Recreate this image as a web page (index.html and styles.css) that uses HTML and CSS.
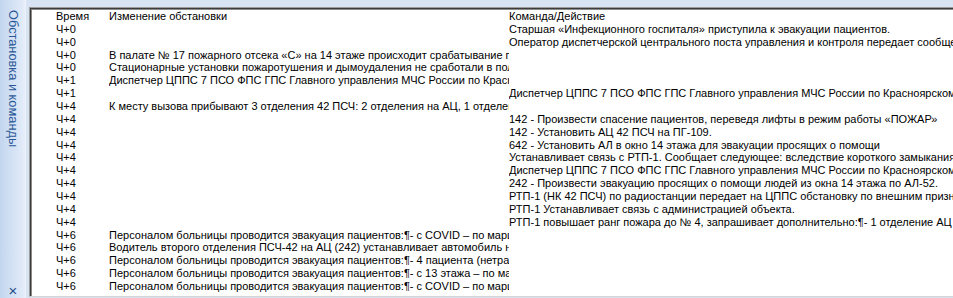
FILE: index.html
```html
<!DOCTYPE html>
<html lang="ru">
<head>
<meta charset="utf-8">
<title>Обстановка и команды</title>
<link rel="stylesheet" href="styles.css">
</head>
<body>
<div class="window">
  <aside class="sidebar">
    <span class="sidebar-title">Обстановка и команды</span>
    <span class="sidebar-close">×</span>
  </aside>
  <main class="panel">
    <div class="grid">
      <div class="cell">Время</div><div class="cell">Изменение обстановки</div><div class="cell">Команда/Действие</div>
      <div class="cell">Ч+0</div><div class="cell"></div><div class="cell">Старшая «Инфекционного госпиталя» приступила к эвакуации пациентов.</div>
      <div class="cell">Ч+0</div><div class="cell"></div><div class="cell">Оператор диспетчерской центрального поста управления и контроля передает сообщение о пожаре в ЦППС</div>
      <div class="cell">Ч+0</div><div class="cell">В палате № 17 пожарного отсека «С» на 14 этаже происходит срабатывание пожарной сигнализации</div><div class="cell"></div>
      <div class="cell">Ч+0</div><div class="cell">Стационарные установки пожаротушения и дымоудаления не сработали в полном объеме</div><div class="cell"></div>
      <div class="cell">Ч+1</div><div class="cell">Диспетчер ЦППС 7 ПСО ФПС ГПС Главного управления МЧС России по Красноярскому краю</div><div class="cell"></div>
      <div class="cell">Ч+1</div><div class="cell"></div><div class="cell">Диспетчер ЦППС 7 ПСО ФПС ГПС Главного управления МЧС России по Красноярскому краю высылает</div>
      <div class="cell">Ч+4</div><div class="cell">К месту вызова прибывают 3 отделения 42 ПСЧ: 2 отделения на АЦ, 1 отделение на АЛ-52</div><div class="cell"></div>
      <div class="cell">Ч+4</div><div class="cell"></div><div class="cell">142 - Произвести спасение пациентов, переведя лифты в режим работы «ПОЖАР»</div>
      <div class="cell">Ч+4</div><div class="cell"></div><div class="cell">142 - Установить АЦ 42 ПСЧ на ПГ-109.</div>
      <div class="cell">Ч+4</div><div class="cell"></div><div class="cell">642 - Установить АЛ в окно 14 этажа для эвакуации просящих о помощи</div>
      <div class="cell">Ч+4</div><div class="cell"></div><div class="cell">Устанавливает связь с РТП-1. Сообщает следующее: вследствие короткого замыкания произошло</div>
      <div class="cell">Ч+4</div><div class="cell"></div><div class="cell">Диспетчер ЦППС 7 ПСО ФПС ГПС Главного управления МЧС России по Красноярскому краю высылает</div>
      <div class="cell">Ч+4</div><div class="cell"></div><div class="cell">242 - Произвести эвакуацию просящих о помощи людей из окна 14 этажа по АЛ-52.</div>
      <div class="cell">Ч+4</div><div class="cell"></div><div class="cell">РТП-1 (НК 42 ПСЧ) по радиостанции передает на ЦППС обстановку по внешним признакам</div>
      <div class="cell">Ч+4</div><div class="cell"></div><div class="cell">РТП-1 Устанавливает связь с администрацией объекта.</div>
      <div class="cell">Ч+4</div><div class="cell"></div><div class="cell">РТП-1 повышает ранг пожара до № 4, запрашивает дополнительно:¶- 1 отделение АЦ</div>
      <div class="cell">Ч+6</div><div class="cell">Персоналом больницы проводится эвакуация пациентов:¶- с COVID – по маршруту</div><div class="cell"></div>
      <div class="cell">Ч+6</div><div class="cell">Водитель второго отделения ПСЧ-42 на АЦ (242) устанавливает автомобиль на ПГ</div><div class="cell"></div>
      <div class="cell">Ч+6</div><div class="cell">Персоналом больницы проводится эвакуация пациентов:¶- 4 пациента (нетранспортабельные)</div><div class="cell"></div>
      <div class="cell">Ч+6</div><div class="cell">Персоналом больницы проводится эвакуация пациентов:¶- с 13 этажа – по маршруту</div><div class="cell"></div>
      <div class="cell">Ч+6</div><div class="cell">Персоналом больницы проводится эвакуация пациентов:¶- с COVID – по маршруту</div><div class="cell"></div>
    </div>
  </main>
</div>
</body>
</html>
```

FILE: styles.css
```css
html, body {
  margin: 0;
  padding: 0;
  width: 953px;
  height: 298px;
  overflow: hidden;
  background: #d8e4f4;
  font-family: "Liberation Sans", Arial, sans-serif;
}

.window {
  display: flex;
  height: 298px;
}

.sidebar {
  width: 26px;
  flex: none;
  display: flex;
  flex-direction: column;
  justify-content: space-between;
  align-items: center;
  padding: 10px 0 1px 1px;
  box-sizing: border-box;
  background: linear-gradient(to right, #c3d6ef, #dde8f7 80%, #e6eef9);
  border-right: 1px solid #eef3fb;
}

.sidebar-title {
  writing-mode: vertical-rl;
  font-size: 12.8px;
  color: #2a5796;
  white-space: nowrap;
}

.sidebar-close {
  font-size: 15px;
  line-height: 12px;
  color: #244f8c;
}

.panel {
  flex: 1;
  margin: 7px 0 1px 3px;
  background: #ffffff;
  border-top: 1px solid #9c9c9c;
  border-left: 1px solid #9c9c9c;
  border-bottom: 1px solid #d4d4d4;
  box-shadow: inset 1px 1px 0 #3c3c3c, inset 2px 2px 0 #8a8a8a;
  overflow: hidden;
  padding: 2px 0 0 26px;
}

.grid {
  display: grid;
  grid-template-columns: 53px 400px 1fr;
  font-size: 11px;
  line-height: 12.86px;
  color: #000;
}

.cell {
  white-space: nowrap;
  overflow: hidden;
  padding-right: 7px;
  min-height: 12.86px;
}
```
